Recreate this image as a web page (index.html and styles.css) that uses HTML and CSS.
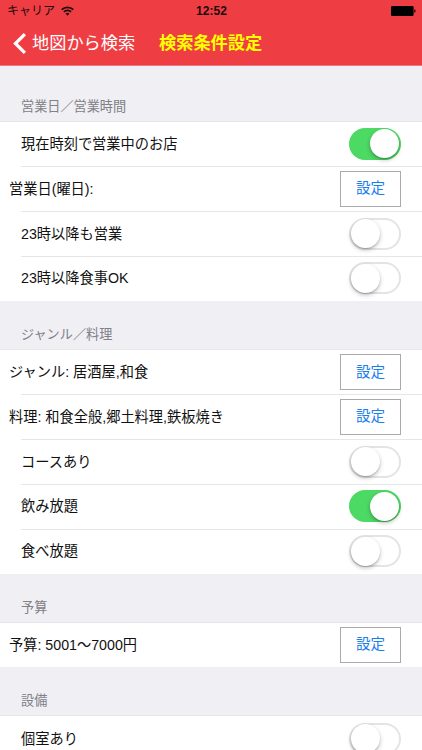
FILE: index.html
```html
<!DOCTYPE html>
<html lang="ja">
<head>
<meta charset="utf-8">
<title>検索条件設定</title>
<link rel="stylesheet" href="styles.css">
</head>
<body>
<header class="top">
  <div class="status">
    <div class="carrier"><span>キャリア</span>
      <svg class="wifi" viewBox="0 0 13 10" width="13" height="10" fill="none" stroke="#1c0a0b" stroke-width="1.7"><path d="M.7 3.7a8.2 8.2 0 0 1 11.6 0M2.9 5.9a5.1 5.1 0 0 1 7.2 0"/><path d="M6.5 9.7 4.5 7.6a2.9 2.9 0 0 1 4 0z" fill="#1c0a0b" stroke="none"/></svg>
    </div>
    <div class="clock">12:52</div>
    <svg class="battery" viewBox="0 0 25 10" width="25" height="10"><rect width="22.6" height="10" rx="1.2"/><path d="M23.3 3.2q1.3.3 1.3 1.8t-1.3 1.8z"/></svg>
  </div>
  <nav class="nav">
    <a class="back"><svg viewBox="0 0 13 21" width="13" height="21" fill="none" stroke="#fff" stroke-width="3.2"><path d="M11.9 1.1 2.4 10.5l9.5 9.4"/></svg><span>地図から検索</span></a>
    <h1>検索条件設定</h1>
  </nav>
</header>
<main>
  <h2 class="first">営業日／営業時間</h2>
  <ul>
    <li><span>現在時刻で営業中のお店</span><i class="switch on"></i></li>
    <li class="wide"><span>営業日(曜日):</span><button>設定</button></li>
    <li><span>23時以降も営業</span><i class="switch"></i></li>
    <li><span>23時以降食事OK</span><i class="switch"></i></li>
  </ul>
  <h2>ジャンル／料理</h2>
  <ul>
    <li class="wide"><span>ジャンル: 居酒屋,和食</span><button>設定</button></li>
    <li class="wide"><span>料理: 和食全般,郷土料理,鉄板焼き</span><button>設定</button></li>
    <li><span>コースあり</span><i class="switch"></i></li>
    <li><span>飲み放題</span><i class="switch on"></i></li>
    <li><span>食べ放題</span><i class="switch"></i></li>
  </ul>
  <h2>予算</h2>
  <ul>
    <li class="wide"><span>予算: 5001〜7000円</span><button>設定</button></li>
  </ul>
  <h2>設備</h2>
  <ul>
    <li><span>個室あり</span><i class="switch"></i></li>
  </ul>
</main>
</body>
</html>
```
FILE: styles.css
```css
* { box-sizing: border-box; }
body {
  margin: 0;
  height: 750px;
  overflow: hidden;
  background: #efeff4;
  color: #111;
  font: 14.22px/20px "Liberation Sans", "Noto Sans CJK JP", sans-serif;
}
.top {
  height: 66px;
  background: #ef3e43;
  border-bottom: 1px solid #e9777f;
}
.status {
  display: grid;
  grid-template-columns: 1fr auto 1fr;
  align-items: center;
  height: 21px;
  padding: 0 6px 0 7px;
  color: #1c0a0b;
  font-size: 12px;
}
.carrier { display: flex; align-items: center; gap: 6px; }
.clock { font-size: 12px; font-weight: bold; letter-spacing: .1px; }
.battery { justify-self: end; }
.nav {
  display: flex;
  align-items: center;
  height: 44px;
  padding-left: 13px;
  font-size: 17.2px;
}
.back { display: flex; align-items: center; gap: 6px; width: 146px; color: #fff; }
h1 { margin: 0; font-size: 17.2px; font-weight: bold; color: #ff0; }
h2 {
  display: flex;
  align-items: flex-end;
  height: 48.9px;
  margin: 0;
  padding: 0 21px 5px;
  color: #808085;
  font-size: 13.15px;
  font-weight: normal;
}
h2.first { height: 55.6px; }
ul {
  margin: 0;
  padding: 0;
  list-style: none;
  background: #fff;
  box-shadow: 0 -1px #e6e6ea;
}
li {
  display: flex;
  align-items: center;
  justify-content: space-between;
  height: 44.8px;
  margin-left: 21px;
  padding-right: 21px;
}
li + li { background: linear-gradient(#e6e6e8, #e6e6e8) 0 0 / 100% 1px no-repeat; }
.wide > span { margin-left: -12px; }
button {
  width: 61px;
  height: 36px;
  padding: 0 0 3px;
  border: 1px solid #aaa;
  background: #fff;
  color: #1a80ee;
  font: 14.6px/20px "Noto Sans CJK JP", sans-serif;
}
.switch {
  display: flex;
  align-items: center;
  width: 52px;
  height: 32px;
  border: 1.5px solid #e4e4e4;
  border-width: 2px;
  border-radius: 16px;
}
.switch::before {
  content: "";
  width: 29px;
  height: 29px;
  border-radius: 50%;
  background: #fff;
  box-shadow: 0 2px 4px rgba(0, 0, 0, .25), 0 1px 1px rgba(0, 0, 0, .15);
}
.on {
  justify-content: flex-end;
  border-color: #4cd964;
  background: #4cd964;
}
```
